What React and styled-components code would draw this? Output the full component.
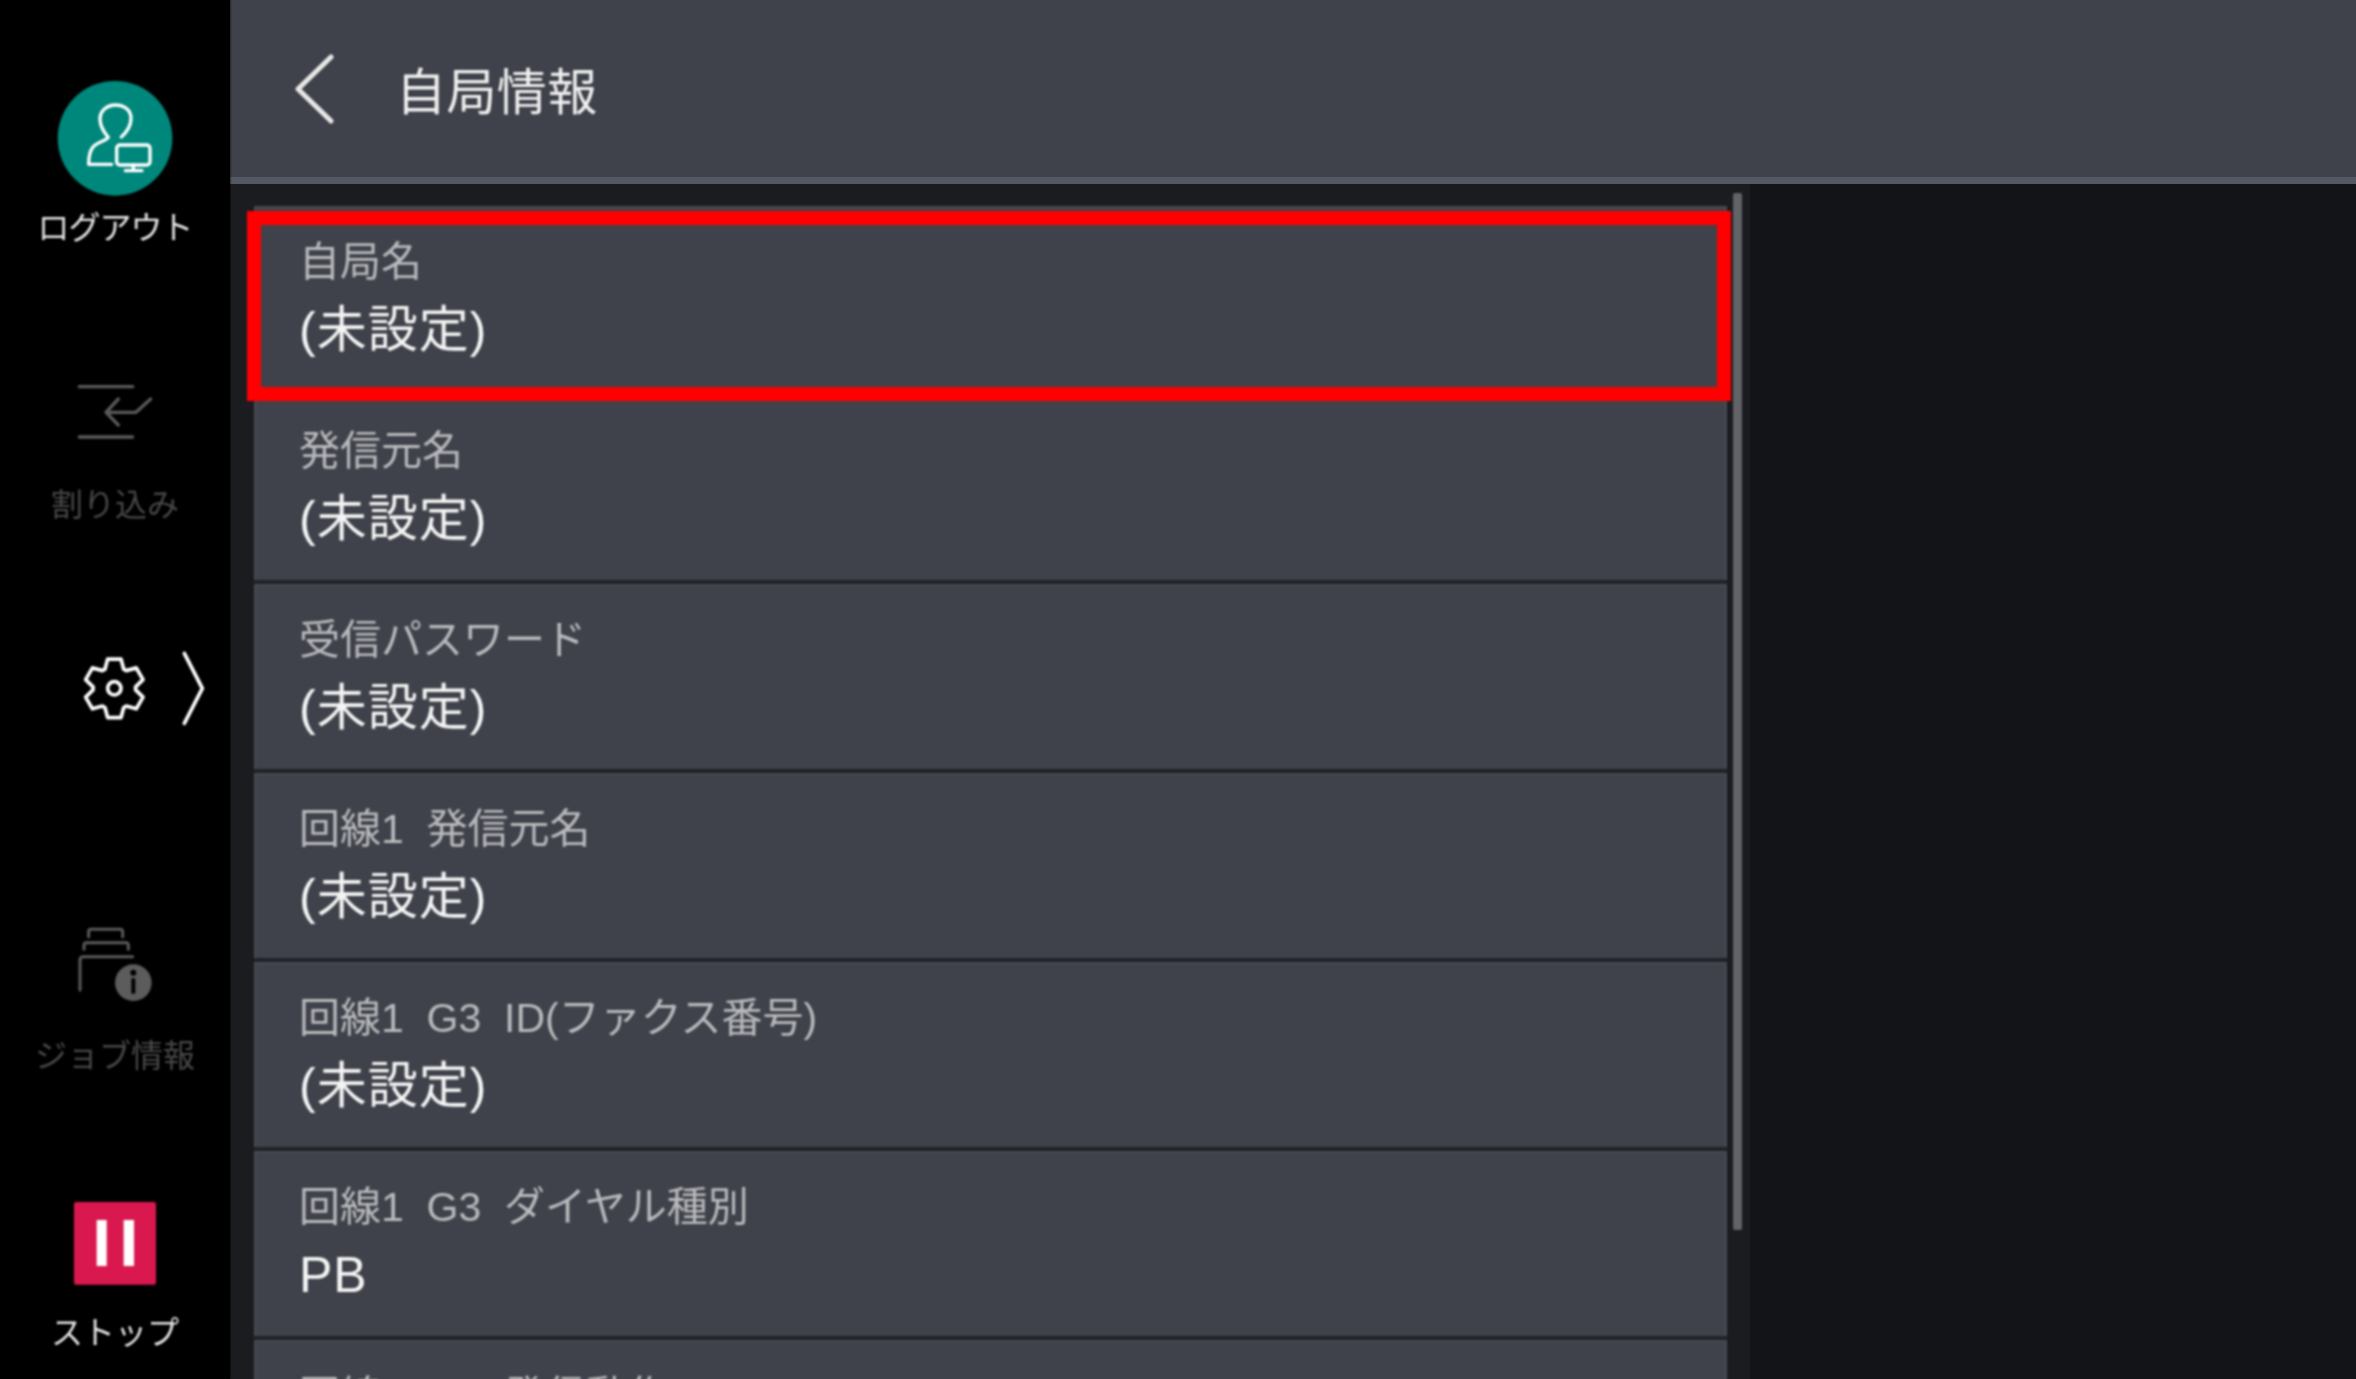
import React from "react";
import styled, { createGlobalStyle } from "styled-components";

const Global = createGlobalStyle`
  html, body { margin: 0; padding: 0; background: #000; }
  body {
    width: 2356px; height: 1379px; overflow: hidden;
    font-family: "Liberation Sans", "Noto Sans CJK JP", sans-serif;
  }
`;

const Page = styled.div`
  display: flex; width: 2356px; height: 1379px; overflow: hidden;
`;
const Sidebar = styled.nav`
  width: 230px; flex: none; background: #000;
  display: flex; flex-direction: column; align-items: center;
  padding-top: 75px; box-sizing: border-box; filter: blur(1px);
`;
const SideItem = styled.div`
  display: flex; flex-direction: column; align-items: center;
  margin-top: ${p => p.$mt || 0}px;
`;
const SideIcon = styled.svg`
  display: block; flex: none; fill: none;
  stroke: ${p => p.$color || "#fff"};
  stroke-linecap: round; stroke-linejoin: round;
  margin-left: ${p => p.$shift || 0}px;
`;
const SideLabel = styled.div`
  font-size: 32px; line-height: 32px; white-space: nowrap;
  margin-top: ${p => p.$gap}px;
  letter-spacing: ${p => p.$tight ? "-1px" : "0"};
  color: ${p => (p.$dim ? "#484848" : "#e4e4e4")};
`;
const GearRow = styled.div`
  align-self: flex-start; margin-left: 70px; margin-top: 119px; display: flex;
`;
const Main = styled.main`
  flex: 1; display: flex; flex-direction: column; min-width: 0;
`;
const Header = styled.header`
  height: 184px; flex: none; box-sizing: border-box;
  background: #3f424a; border-bottom: 7px solid #535863;
  display: flex; align-items: center; padding-left: 65px;
`;
const BackIcon = styled.svg`
  display: block; flex: none; fill: none; stroke: #e8e8e8;
  stroke-width: 5; stroke-linecap: round; stroke-linejoin: round;
  filter: blur(1px);
`;
const Title = styled.h1`
  margin: 8px 0 0 61px; font-size: 50px; line-height: 60px; font-weight: 400; color: #f0f0f0;
  letter-spacing: 0.4px; filter: blur(1px);
`;
const Content = styled.div`
  flex: 1; display: flex; min-height: 0; background: #131418;
`;
const Panel = styled.section`
  width: 1520px; flex: none; background: #1b1c20; box-sizing: border-box;
  padding-left: 24px; display: flex; gap: 6px; overflow: hidden;
`;
const List = styled.div`
  width: 1473px; flex: none; display: flex; flex-direction: column; margin-top: 22px;
  filter: blur(1px);
`;
const Row = styled.div`
  position: relative; height: 189px; flex: none; box-sizing: border-box;
  background: #3f424a;
  box-shadow: inset 2px 0 0 #484b53, inset -2px 0 0 #484b53, inset 0 2px 0 #474a52;
  border-bottom: 4px solid #212227;
  padding: 34px 0 0 45px;
`;
const RowLabel = styled.div`
  font-size: 41px; line-height: 44px; color: #b9babd; white-space: pre;
`;
const RowValue = styled.div`
  font-size: 50px; line-height: 50px; letter-spacing: 1px; color: #f4f4f4; margin-top: 21px;
`;
const Highlight = styled.div`
  position: absolute; left: -7px; top: 5px; width: 1484px; height: 190px;
  box-sizing: border-box; border: 14px solid #f00; z-index: 1;
`;
const Scrollbar = styled.div`
  width: 9px; height: 1037px; margin-top: 9px; flex: none;
  background: #626367; border-radius: 2px; filter: blur(1px);
`;

const gearPath = (() => {
  const cx = 133, cy = 145, pts = [];
  for (let i = 0; i < 6; i++) {
    const a = -90 + i * 60;
    [[-26, 64], [-13, 90], [13, 90], [26, 64]].forEach(([d, r]) => {
      const t = ((a + d) * Math.PI) / 180;
      pts.push(`${(cx + r * Math.cos(t)).toFixed(1)} ${(cy + r * Math.sin(t)).toFixed(1)}`);
    });
  }
  return "M" + pts.join("L") + "Z";
})();

const rows = [
  ["自局名", "(未設定)"],
  ["発信元名", "(未設定)"],
  ["受信パスワード", "(未設定)"],
  ["回線1  発信元名", "(未設定)"],
  ["回線1  G3  ID(ファクス番号)", "(未設定)"],
  ["回線1  G3  ダイヤル種別", "PB"],
  ["回線1  G3  発信動作", ""],
];

export default function App() {
  return (
    <Page>
      <Global />
      <Sidebar>
        <SideItem>
          <SideIcon width="130" height="130" viewBox="0 0 390 390" strokeWidth="10">
            <circle cx="195" cy="190" r="172" fill="#00877b" stroke="none" />
            <path d="M214 186C232 170 243 155 243 130C243 105 222 90 197 90C170 90 150 108 150 132C150 155 162 172 175 187C170 197 145 200 130 215C118 228 116 245 116 268L185 268" />
            <rect x="200" y="210" width="100" height="60" rx="10" />
            <path d="M250 270V285M226 287H276" />
          </SideIcon>
          <SideLabel $gap={7} $tight>ログアウト</SideLabel>
        </SideItem>
        <SideItem $mt={121}>
          <SideIcon width="110" height="110" viewBox="0 0 330 330" strokeWidth="10" $color="#5a5a5a">
            <path d="M58 65H218M58 216H218M272 102L228 142H140M175 102L138 142L175 180" />
          </SideIcon>
          <SideLabel $gap={14} $dim>割り込み</SideLabel>
        </SideItem>
        <GearRow>
          <SideIcon width="150" height="100" viewBox="0 0 450 300" strokeWidth="11">
            <path d={gearPath} />
            <circle cx="133" cy="145" r="20" />
            <path d="M343 40L397 145L343 250" />
          </SideIcon>
        </GearRow>
        <SideItem $mt={170}>
          <SideIcon width="100" height="100" viewBox="0 0 300 300" strokeWidth="9" $color="#5a5a5a" $shift={10}>
            <path d="M56 80V65Q56 58 63 58H150Q158 58 158 65V80M42 118V105Q42 98 50 98H168Q175 98 175 105V118M30 240V150Q30 140 40 140H188" />
            <circle cx="190" cy="218" r="55" fill="#5c5c5c" stroke="none" />
            <circle cx="190" cy="188" r="9" fill="#000" stroke="none" />
            <rect x="184" y="205" width="12" height="46" fill="#000" stroke="none" />
          </SideIcon>
          <SideLabel $gap={30} $dim>ジョブ情報</SideLabel>
        </SideItem>
        <SideItem $mt={118}>
          <SideIcon width="110" height="110" viewBox="0 0 330 330" $color="none">
            <rect x="42" y="36" width="246" height="248" rx="6" fill="#d9184f" />
            <rect x="110" y="90" width="30" height="138" fill="#fff" />
            <rect x="191" y="90" width="31" height="138" fill="#fff" />
          </SideIcon>
          <SideLabel $gap={17}>ストップ</SideLabel>
        </SideItem>
      </Sidebar>
      <Main>
        <Header>
          <BackIcon width="40" height="70" viewBox="0 0 40 70">
            <path d="M36 3L3 35L36 67" />
          </BackIcon>
          <Title>自局情報</Title>
        </Header>
        <Content>
          <Panel>
            <List>
              {rows.map(([label, value], i) => (
                <Row key={i}>
                  {i === 0 && <Highlight />}
                  <RowLabel>{label}</RowLabel>
                  {value && <RowValue>{value}</RowValue>}
                </Row>
              ))}
            </List>
            <Scrollbar />
          </Panel>
        </Content>
      </Main>
    </Page>
  );
}
